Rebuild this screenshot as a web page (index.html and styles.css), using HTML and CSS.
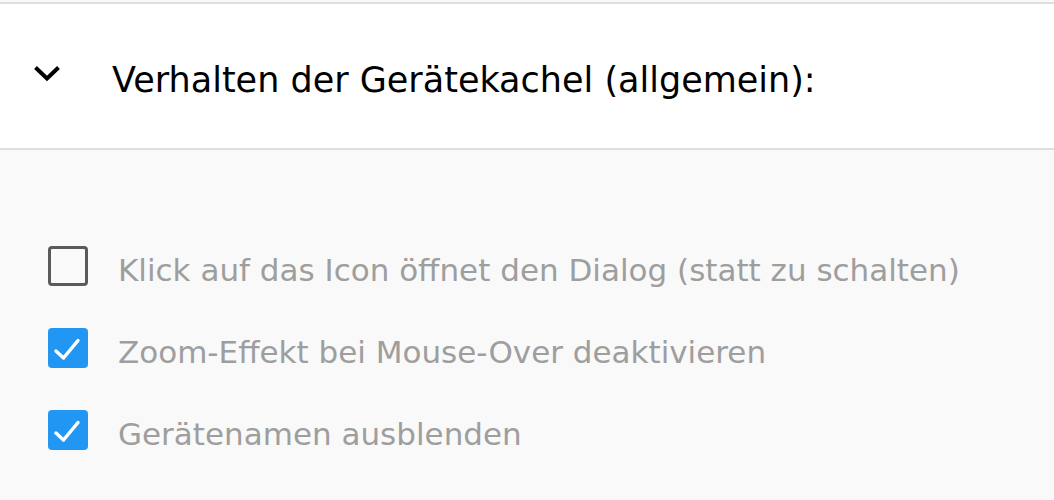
FILE: index.html
```html
<!DOCTYPE html>
<html lang="de">
<head>
<meta charset="utf-8">
<link rel="stylesheet" href="styles.css">
</head>
<body>
<div class="panel">
  <div class="header">
    <svg class="chevron" width="26" height="16" viewBox="0 0 26 16"><path d="M1.5 1.5 L13 12.5 L24.5 1.5" fill="none" stroke="#000" stroke-width="4"/></svg>
    <span class="title">Verhalten der Gerätekachel (allgemein):</span>
  </div>
  <div class="body">
    <label class="row">
      <span class="box"></span>
      <span class="label">Klick auf das Icon öffnet den Dialog (statt zu schalten)</span>
    </label>
    <label class="row">
      <span class="box checked"><svg width="40" height="40" viewBox="0 0 40 40"><path d="M8 23 L15.5 30 L30 12.5" fill="none" stroke="#fff" stroke-width="3.5" stroke-linecap="round" stroke-linejoin="round"/></svg></span>
      <span class="label">Zoom-Effekt bei Mouse-Over deaktivieren</span>
    </label>
    <label class="row">
      <span class="box checked"><svg width="40" height="40" viewBox="0 0 40 40"><path d="M8 23 L15.5 30 L30 12.5" fill="none" stroke="#fff" stroke-width="3.5" stroke-linecap="round" stroke-linejoin="round"/></svg></span>
      <span class="label">Gerätenamen ausblenden</span>
    </label>
  </div>
</div>
</body>
</html>
```
FILE: styles.css
```css
html, body {
  margin: 0;
  padding: 0;
  background: #f9f9f9;
  font-family: "DejaVu Sans", "Liberation Sans", sans-serif;
}
.panel {
  padding-top: 2px;
}
.header {
  background: #fff;
  border-top: 2px solid #dedede;
  border-bottom: 2px solid #dedede;
  height: 144px;
  display: flex;
  align-items: center;
}
.chevron {
  margin-left: 34px;
  margin-top: -4px;
  flex: none;
}
.title {
  margin-left: 52px;
  font-size: 35px;
  color: #000;
  margin-top: 8px;
}
.body {
  padding: 96px 0 0 48px;
  display: flex;
  flex-direction: column;
  gap: 42px;
}
.row {
  display: flex;
  align-items: center;
  height: 40px;
}
.box {
  width: 40px;
  height: 40px;
  box-sizing: border-box;
  border: 3.5px solid #5a5a5a;
  border-radius: 4px;
  flex: none;
}
.box.checked {
  background: #2196f3;
  border: none;
}
.box svg {
  display: block;
}
.label {
  margin-left: 30px;
  font-size: 31px;
  color: #9e9e9e;
  padding-top: 7px;
}
```
